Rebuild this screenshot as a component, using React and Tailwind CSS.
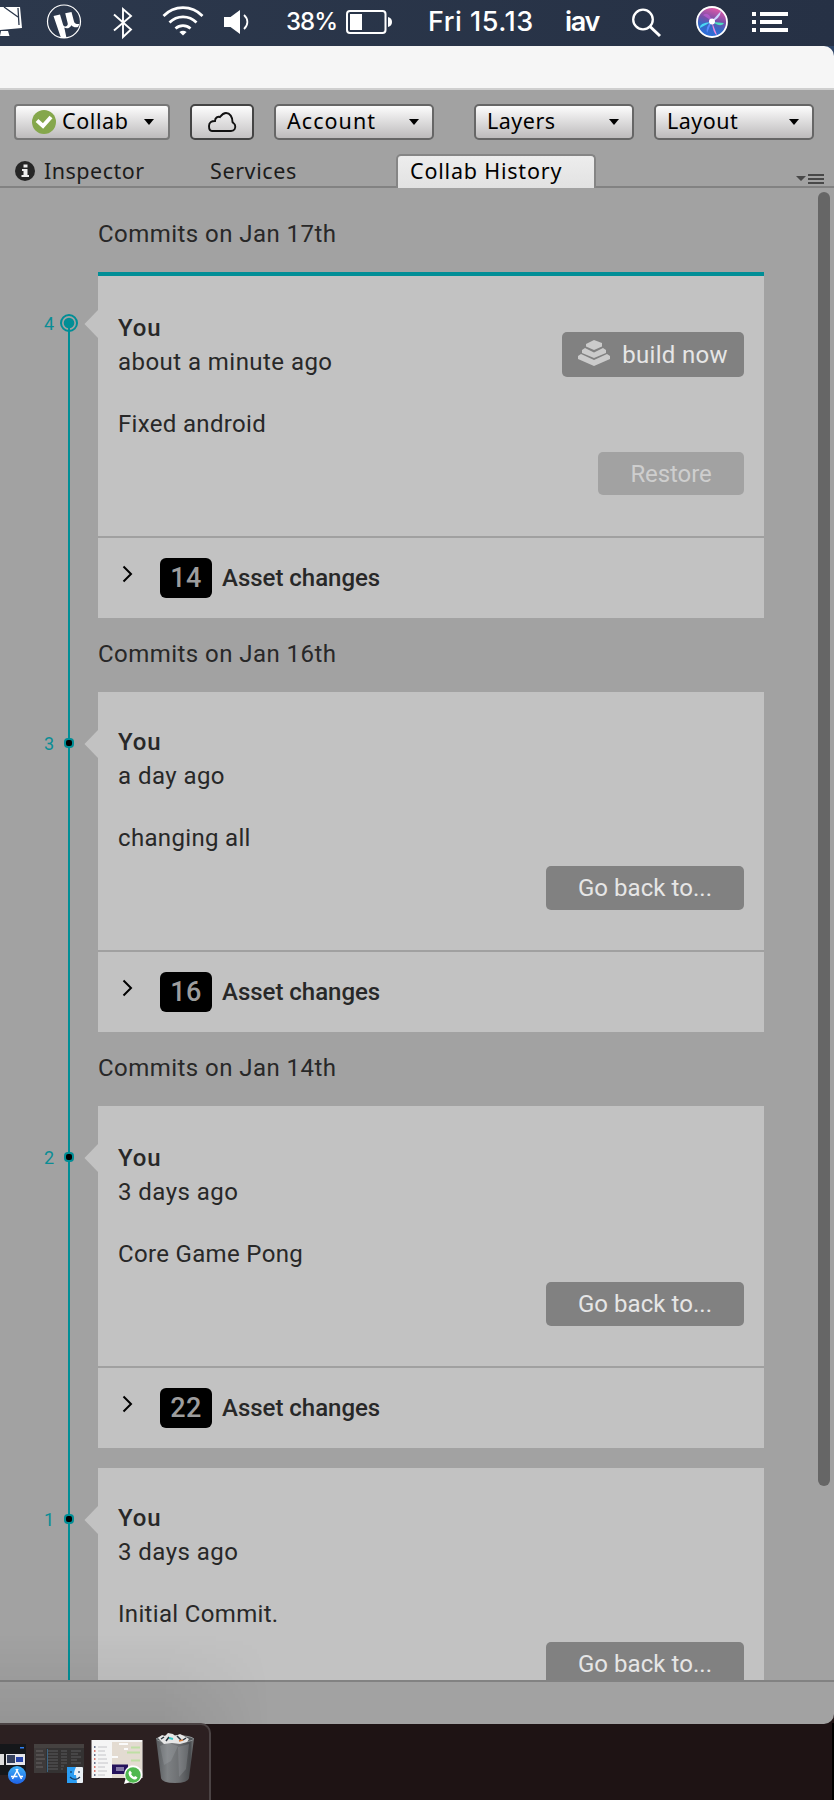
import React from 'react';

const commits = [
  { id: 4, heading: 'Commits on Jan 17th', time: 'about a minute ago', message: 'Fixed android', changes: 14, current: true },
  { id: 3, heading: 'Commits on Jan 16th', time: 'a day ago', message: 'changing all', changes: 16 },
  { id: 2, heading: 'Commits on Jan 14th', time: '3 days ago', message: 'Core Game Pong', changes: 22, shift: true },
  { id: 1, time: '3 days ago', message: 'Initial Commit.' },
];

function MenuBar() {
  return (
    <div className="flex h-[46px] items-start bg-linear-to-r from-[#2c384c] to-[#263145] font-['Inter',sans-serif] font-medium text-white">
      <svg className="h-[46px] w-[22px]" viewBox="0 0 22 46" fill="#fff">
        <path d="M0 7 20 7 22 28 0 30Z" />
        <path d="M1 31h7l1.500 5H0z" />
        <path d="M4 7 18 17M18 8l1 17" stroke="#2b374b" strokeWidth="1.300" fill="none" />
      </svg>
      <svg className="ml-[24px] h-[46px] w-[36px]" viewBox="0 0 36 46">
        <circle cx="18" cy="21.500" r="16.500" fill="none" stroke="#fff" strokeWidth="1.200" />
        <path d="M7.500 16l6.500-1.500 3 10c1 3 4.600 2.500 4.800-.5l-.3-1.500-2.300-9.300 6.300-1.300 2.500 9.500c.6 2.200 2.800 3 5.500 2.600l-1.500 3c-2.500.8-5 .2-6.500-1.800-1.500 3-5 4-7.200 2.300L20.500 38h-5.500z" fill="#fff" />
      </svg>
      <svg className="ml-[31px] h-[46px] w-[20px]" viewBox="0 0 20 46" fill="none" stroke="#fff" strokeWidth="1.900">
        <path d="M1 14.500 18 29.500 10 37V9l8 7L1 30.500" />
      </svg>
      <svg className="ml-[29px] h-[46px] w-[42px]" viewBox="0 0 42 46" fill="none" stroke="#fff" strokeWidth="2.700">
        <path d="M1.500 16a27 27 0 0 1 39 0M7.500 22.500a19 19 0 0 1 27 0M13.500 28.500a11 11 0 0 1 15 0" />
        <path d="M21 35.500l-3.600-3.500q3.600-2.400 7.200 0z" fill="#fff" stroke="none" />
      </svg>
      <svg className="ml-[20px] h-[46px] w-[26px]" viewBox="0 0 26 46">
        <path d="M0 17h6.500L16 10v24l-9.500-7H0z" fill="#fff" />
        <path d="M20 15c4.500 4 4.500 10 0 14" fill="none" stroke="#fff" strokeWidth="1.800" />
      </svg>
      <span className="ml-[36px] w-[52px] whitespace-nowrap pt-[7px] text-[24px] leading-[30px] tracking-[-1px]">38%</span>
      <svg className="ml-[8px] h-[46px] w-[48px]" viewBox="0 0 48 46">
        <rect x="1" y="11" width="38.500" height="22" rx="3" fill="none" stroke="#fff" strokeWidth="2" />
        <rect x="4" y="14" width="12" height="16" fill="#fff" />
        <path d="M42 17q4 1 4 5t-4 5z" fill="#fff" />
      </svg>
      <span className="ml-[34px] w-[111px] whitespace-nowrap pt-[7px] text-[27px] leading-[30px] tracking-[0.500px]">Fri 15.13</span>
      <span className="ml-[26px] w-[42px] pt-[7px] text-[27px] font-semibold leading-[30px] tracking-[-1.300px]">iav</span>
      <svg className="ml-[25px] h-[46px] w-[30px]" viewBox="0 0 30 46" fill="none" stroke="#fff" strokeWidth="2.300">
        <circle cx="11" cy="19.500" r="9.800" />
        <path d="M18 26.500 28 36" strokeWidth="3" />
      </svg>
      <svg className="ml-[34px] h-[46px] w-[34px]" viewBox="0 0 34 46">
        <defs>
          <linearGradient id="siri" x1="0.600" y1="0" x2="0.300" y2="1">
            <stop offset="0" stopColor="#e85aa8" />
            <stop offset="0.400" stopColor="#7a4fa8" />
            <stop offset="0.650" stopColor="#3569c4" />
            <stop offset="1" stopColor="#2b6fe0" />
          </linearGradient>
        </defs>
        <circle cx="16" cy="22" r="15" fill="url(#siri)" stroke="#fff" strokeWidth="1.800" />
        <path d="M16 21 7 15q6-4 9 6z" fill="#b75bd0" opacity=".8" />
        <path d="M15 22 4 28q-1-5 11-6z" fill="#49d7f5" />
        <path d="M17 22l11 1q-3 5-11-1z" fill="#4ce0c0" />
        <path d="M16 22l5 13q-4-1-5-13z" fill="#f08ae0" />
        <path d="M15 22 25 11q-1 8-10 11z" fill="#c9d5ff" />
        <path d="M16 21 11 33q-2-6 5-12z" fill="#5c8cff" />
        <circle cx="16" cy="21.500" r="3" fill="#fff" />
      </svg>
      <svg className="ml-[22px] h-[46px] w-[36px]" viewBox="0 0 36 46" fill="#fff">
        <path d="M0 12h4v4H0zM8 12h28v4H8zM0 20h4v4H0zM8 20h22v4H8zM0 28h4v4H0zM8 28h28v4H8z" />
      </svg>
    </div>
  );
}

function Caret() {
  return (
    <svg className="h-[6px] w-[10px]" viewBox="0 0 10 6">
      <path d="M0 0h10L5 6z" fill="#000" />
    </svg>
  );
}

function DropDown({ label, className }) {
  return (
    <button className={`flex h-9 w-40 items-center justify-between rounded-[5px] border-2 border-[#666] bg-linear-to-b from-[#fdfdfd] to-[#bdbbbc] pl-[11px] pr-[13px] text-left ${className}`}>
      <span className="relative -top-px">{label}</span>
      <Caret />
    </button>
  );
}

function Toolbar() {
  return (
    <div className="flex h-[64px] items-start pl-[14px] pt-[14px] font-['Noto_Sans',sans-serif] text-[21.500px] leading-[30px] tracking-[0.500px] text-black">
      <button className="flex h-9 w-[156px] items-center rounded-[4px] border-2 border-[#777] bg-linear-to-b from-[#fdfdfd] to-[#bdbbbc] pl-4 tracking-[0.600px]">
        <svg className="mr-[6px] h-6 w-6" viewBox="0 0 24 24">
          <circle cx="12" cy="12" r="12" fill="#85a74c" />
          <path d="M5 10.500l6 5.500 8-9" fill="none" stroke="#fff" strokeWidth="4" />
        </svg>
        <span className="relative -top-px mr-auto">Collab</span>
        <span className="mr-[14px] flex"><Caret /></span>
      </button>
      <button className="ml-5 flex h-9 w-16 items-center justify-center rounded-[5px] border-2 border-[#444] bg-linear-to-b from-[#fdfdfd] to-[#c4c2c3]">
        <svg className="h-5 w-[30px]" viewBox="0 0 30 20" fill="none" stroke="#111" strokeWidth="1.900">
          <path d="M5 19h19c3.500 0 5-3 4-6-.5-1.500-2-2-2.500-3C25.500 5 23 1 19 1c-3 0-4.500 2-6 4-2-.8-5 .5-5 4-3 0-6 1-6 5 0 3 1 5 3 5z" />
        </svg>
      </button>
      <DropDown label="Account" className="ml-5 tracking-[1.050px]" />
      <DropDown label="Layers" className="ml-10" />
      <DropDown label="Layout" className="ml-5" />
    </div>
  );
}

function Tabs() {
  return (
    <div className="flex h-[34px] items-stretch font-['Noto_Sans',sans-serif] text-[21.500px] leading-[34px] tracking-[0.500px] text-[#1c1c1c] shadow-[inset_0_-2px_0_#828282]">
      <svg className="ml-[15px] mt-[7px] h-5 w-5" viewBox="0 0 20 20">
        <circle cx="10" cy="10" r="10" fill="#262626" />
        <path d="M8.500 3.500h4v3h-4zM7 8h5.500v6H14v2H6.500v-2h2v-4H7z" fill="#eee" />
      </svg>
      <span className="ml-[9px] w-[166px]">Inspector</span>
      <span className="w-[186px] tracking-[0.600px]">Services</span>
      <div className="w-[200px] whitespace-nowrap rounded-t-[5px] border-x-2 border-t-2 border-[#858585] bg-linear-to-b from-[#ededed] to-[#e2e2e2] pl-[12px] leading-[30px] tracking-[0.800px] text-black">
        Collab History
      </div>
      <svg className="ml-[200px] mt-[19px] h-3 w-7" viewBox="0 0 28 12" fill="#484848">
        <path d="M0 3h10L5 8zM12 1h16v2H12zM12 5h16v2H12zM12 9h16v2H12z" />
      </svg>
    </div>
  );
}

function ActionButton({ children, className }) {
  return (
    <button className={`flex items-center justify-center whitespace-nowrap rounded-[5px] ${className}`}>{children}</button>
  );
}

function Marker({ id, current }) {
  return (
    <div className="flex h-[104px] w-[98px] items-center pl-[44px] text-[18px] leading-none text-[#0a8d95]">
      <span className="w-[16px] pb-[1px]">{id}</span>
      <svg className="mb-[2px] h-[18px] w-[18px]" viewBox="0 0 18 18">
        {current ? (
          <>
            <circle cx="9" cy="9" r="8" fill="#a2a2a2" stroke="#008e96" strokeWidth="2" />
            <circle cx="9" cy="9" r="5.300" fill="#008e96" />
            <rect x="8" y="9" width="2" height="9" fill="#008e96" />
          </>
        ) : (
          <>
            <rect x="4" y="4" width="10" height="10" rx="4" fill="#008e96" />
            <rect x="6" y="6" width="6" height="6" rx="2" fill="#000" />
          </>
        )}
      </svg>
      <svg className="ml-[6px] h-7 w-[14px]" viewBox="0 0 14 28">
        <path d="M14 0v28L0.500 14z" fill="#c2c2c2" />
      </svg>
    </div>
  );
}

function Commit({ commit }) {
  const { id, time, message, changes, current, shift } = commit;
  const height = current ? 'h-[264px]' : shift ? 'h-[260px]' : 'h-[258px]';
  const textTop = current ? 'pt-[35px]' : shift ? 'pt-[35px]' : 'pt-[33px]';
  const buttonTop = shift ? 'pt-[176px]' : 'pt-[174px]';
  return (
    <div className="flex">
      <Marker id={id} current={current} />
      <div className="w-[666px] bg-[#c2c2c2]">
        <div className={`flex justify-between px-5 ${height} ${current ? 'border-t-4 border-[#008e96]' : ''}`}>
          <div className={`leading-[34px] ${textTop}`}>
            <div className="font-medium tracking-[0.900px]">You</div>
            <div>{time}</div>
            <div className="mt-[28px] tracking-[0.330px]">{message}</div>
          </div>
          {current ? (
            <div className="flex flex-col items-end pt-[56px] text-[#e6e6e6]">
              <ActionButton className="h-[45px] w-[182px] bg-[#818181] tracking-[0.300px]">
                <svg className="relative -top-[2px] mr-[12px] h-[26px] w-8" viewBox="0 0 32 26" fill="#cbcbcb">
                  <path d="M8 4 16 0l8 3v3.500L16 10 8 6.500z" />
                  <path d="M4 10l3-2 9 4.500L25 8l3 2v3l-12 5L4 13z" />
                  <path d="M0 16l3-2 13 6 13-6 3 2v3l-16 7-16-7z" />
                </svg>
                <span className="pt-px">build now</span>
              </ActionButton>
              <ActionButton className="mt-[75px] h-[43px] w-[146px] bg-[#a2a2a2] tracking-[-0.100px] text-[#cecece]">Restore</ActionButton>
            </div>
          ) : (
            <div className={`text-[#e6e6e6] ${buttonTop}`}>
              <ActionButton className="h-[44px] w-[198px] bg-[#818181] tracking-[0.050px]">Go back to...</ActionButton>
            </div>
          )}
        </div>
        {changes && (
          <div className="flex h-[82px] items-start border-t-2 border-[#a0a0a0] pl-[24px] pt-5">
            <svg className="mt-[7px] h-[18px] w-3" viewBox="0 0 12 18" fill="none" stroke="#000" strokeWidth="2">
              <path d="M1.500 1.500 9 9l-7.500 7.500" />
            </svg>
            <div className="ml-[26px] flex h-10 w-[52px] items-center justify-center rounded-[6px] bg-black text-[27px] font-medium text-[#9d9d9d]">
              {changes}
            </div>
            <span className="ml-[10px] font-medium leading-[40px] tracking-[-0.020px]">Asset changes</span>
          </div>
        )}
      </div>
    </div>
  );
}

function History() {
  return (
    <div className="relative h-[1492px] overflow-hidden font-['Roboto',sans-serif] text-[24px] tracking-[0.450px] text-[#282828]">
      <div className="absolute left-[68px] top-[135px] h-[1357px] w-[2px] bg-[#008e96]" />
      <div className="relative flex flex-col">
        {commits.map((c, i) => (
          <React.Fragment key={c.id}>
            {c.heading ? (
              <h2 className={`pl-[98px] leading-[30px] ${i === 0 ? 'h-[84px] pt-[31px]' : 'h-[74px] pt-[21px]'}`}>{c.heading}</h2>
            ) : (
              <div className="h-5" />
            )}
            <Commit commit={c} />
          </React.Fragment>
        ))}
      </div>
      <div className="absolute left-[818px] top-[4px] h-[1294px] w-3 rounded-full bg-[#666]" />
    </div>
  );
}

function Dock() {
  return (
    <div className="relative -mt-px flex h-[77px] w-[211px] items-start rounded-tr-[10px] border-r-2 border-t-2 border-[#4b4344] bg-[#2c2021]">
      <svg className="h-[75px] w-[209px]" viewBox="0 1725 209 75">
        <defs>
          <linearGradient id="store" x1="0" y1="0" x2="0" y2="1">
            <stop offset="0" stopColor="#3fb2f8" />
            <stop offset="1" stopColor="#1e62e6" />
          </linearGradient>
          <linearGradient id="can" x1="0" y1="0" x2="1" y2="0">
            <stop offset="0" stopColor="#5b6063" />
            <stop offset="0.300" stopColor="#868b8e" />
            <stop offset="0.600" stopColor="#75797c" />
            <stop offset="0.900" stopColor="#4d5154" />
            <stop offset="1" stopColor="#85898b" />
          </linearGradient>
        </defs>
        {/* App Store window */}
        <rect x="0" y="1744" width="26" height="31" fill="#15171a" />
        <rect x="0" y="1754" width="4" height="11" fill="#ddd" />
        <rect x="6" y="1754" width="19" height="11" fill="#e6e6ea" />
        <rect x="7" y="1755" width="8" height="8" fill="#35405c" />
        <rect x="16" y="1757" width="7" height="5" fill="#2745a8" />
        <rect x="20" y="1747" width="4" height="1.500" fill="#2f7cf0" />
        <circle cx="17" cy="1775" r="9" fill="url(#store)" />
        <path d="M18 1769l-5.500 10M16 1769l5.500 10M11 1776.500h6.500M20 1776.500h3" stroke="#fff" strokeWidth="1.500" fill="none" />
        {/* Finder window */}
        <rect x="34" y="1744" width="50" height="29" fill="#343232" />
        <rect x="34" y="1744" width="50" height="4" fill="#454140" />
        <rect x="34" y="1748" width="12" height="25" fill="#3e3a3a" />
        <path d="M36 1751h7M36 1755h8M36 1759h9M36 1763h6M36 1767h7" stroke="#696565" strokeWidth="1" />
        <path d="M48 1751h33M48 1754h30M48 1757h34M48 1760h29M48 1763h33M48 1766h16M48 1769h15" stroke="#5a5a5c" strokeWidth="1" strokeDasharray="10 3 6 4" />
        <path d="M47.500 1749v23" stroke="#3d6584" strokeWidth="1" />
        <rect x="67" y="1767" width="16" height="16" rx="1" fill="#eaf0f6" />
        <path d="M67 1767h9c-2 4-2 6-2 8h2l1 8H67z" fill="#2a9df4" />
        <path d="M71 1771v2M79 1771v2M70 1777q5 5 10 0" stroke="#173c62" strokeWidth="1.200" fill="none" />
        {/* Chat window */}
        <rect x="91.500" y="1740" width="51" height="38" fill="#f5f5f5" />
        <rect x="112" y="1742" width="30" height="36" fill="#e3dbd1" />
        <path d="M98 1747h9M98 1751h7M98 1755h8M98 1759h9M98 1763h10M98 1767h7M98 1771h9M98 1775h7" stroke="#c4c4c8" strokeWidth="1" />
        <path d="M94 1747h1.500M94 1755h1.500M94 1763h1.500M94 1775h1.500" stroke="#3e4a6a" strokeWidth="1.500" />
        <path d="M94 1751h1.500M94 1759h1.500M94 1767h1.500M94 1771h1.500" stroke="#cc5145" strokeWidth="1.500" />
        <path d="M131 1747.500h9M127 1752.500h13M131 1760.500h9" stroke="#bfdfa5" strokeWidth="2" />
        <path d="M112 1757h6M119 1744h9M124 1749h4" stroke="#fafafa" strokeWidth="2" />
        <rect x="112" y="1764.500" width="16" height="9.500" fill="#26135c" />
        <rect x="116" y="1767" width="8" height="4" fill="#8579a8" />
        <path d="M124 1784l1.500-5a9 9 0 1 1 4 3.600z" fill="#fff" />
        <circle cx="133" cy="1775" r="7.700" fill="#50b850" />
        <path d="M130 1770.500l2 2.500-1 1q1 2 3 3l1.200-1 2.300 1.500q-1 2.500-3.500 2-4.500-1.500-5.500-6 0-2 1.500-3z" fill="#fff" />
        {/* Trash */}
        <path d="M156 1738l5 40q1 5 14 5t14-5l5-40z" fill="url(#can)" opacity=".9" />
        <path d="M160 1746l8-3 10 3-7 15-7 4zM178 1747l11-3-3 25-7 8z" fill="#b7bcbe" opacity=".22" />
        <ellipse cx="175" cy="1739" rx="18.500" ry="3.500" fill="#52575a" stroke="#8d9294" strokeWidth="1" />
        <path d="M158 1738l4-3 3 1 3-3 5 1 2 2 5-2 4 2 5 3-2 3-7 2-8-1-8 1z" fill="#e6e6e6" />
        <path d="M161 1739l3-2M166 1741l3-4M177 1736l4 4M183 1740l3-2" stroke="#27313a" strokeWidth="1.500" />
        <path d="M169 1738l4 1" stroke="#33c6c5" strokeWidth="2" />
        <path d="M179 1741l4-1" stroke="#d87938" strokeWidth="1.500" />
      </svg>
    </div>
  );
}

export default function App() {
  return (
    <div className="h-[1800px] w-[834px] overflow-hidden bg-[#1e1314]">
      <MenuBar />
      <div className="bg-[#2e4567]">
        <div className="h-[44px] rounded-tr-[10px] border-b-2 border-[#cfcfcf] bg-[#f6f6f6]" />
      </div>
      <div className="relative h-[1634px] overflow-hidden rounded-br-[10px] bg-[#a2a2a2]">
        <Toolbar />
        <Tabs />
        <History />
        <div className="h-[44px] border-t-2 border-[#828282]" />
        <div className="pointer-events-none absolute bottom-0 left-0 h-[90px] w-[270px] bg-linear-to-t from-black/8 to-transparent mask-r-from-60%" />
      </div>
      <div className="border-r-2 border-black">
        <Dock />
      </div>
    </div>
  );
}
